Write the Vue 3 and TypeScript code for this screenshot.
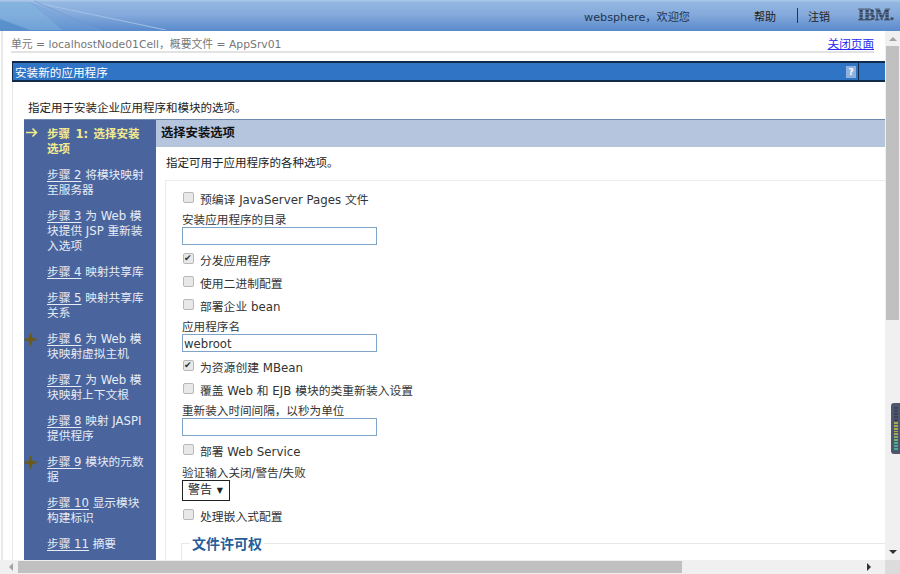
<script setup lang="ts">
interface Step { label: string; rest: string; mark?: 'arrow' | 'star'; current?: boolean }
const steps: Step[] = [
  { label: '步骤 1: 选择安装选项', rest: '', mark: 'arrow', current: true },
  { label: '步骤 2', rest: ' 将模块映射至服务器' },
  { label: '步骤 3', rest: ' 为 Web 模块提供 JSP 重新装入选项' },
  { label: '步骤 4', rest: ' 映射共享库' },
  { label: '步骤 5', rest: ' 映射共享库关系' },
  { label: '步骤 6', rest: ' 为 Web 模块映射虚拟主机', mark: 'star' },
  { label: '步骤 7', rest: ' 为 Web 模块映射上下文根' },
  { label: '步骤 8', rest: ' 映射 JASPI 提供程序' },
  { label: '步骤 9', rest: ' 模块的元数据', mark: 'star' },
  { label: '步骤 10', rest: ' 显示模块构建标识' },
  { label: '步骤 11', rest: ' 摘要' },
]
const meter = Array.from({ length: 15 }, (_, i) => i)
function meterColor(i: number): string {
  if (i < 5) return '#3c4358'
  if (i < 10) return '#a9a94e'
  if (i < 12) return '#7fae72'
  return '#48b08e'
}
</script>

<template>
  <div class="page">
    <header class="top">
      <svg class="swoosh" width="190" height="30" viewBox="0 0 190 30">
        <path d="M0 2H32L62 30H0Z" fill="#7db1de" opacity=".6" />
        <path d="M0 19L30 30H0Z" fill="#4f88c6" opacity=".7" />
        <path d="M28 1L100 30H62Z" fill="#6f9fd6" opacity=".4" />
        <path d="M28 1L166 30" fill="none" stroke="#a9c6e8" stroke-width="1.2" opacity=".8" />
        <path d="M34 1L100 30" fill="none" stroke="#6b97d0" stroke-width="1" opacity=".7" />
      </svg>
      <span class="welcome">websphere，欢迎您</span>
      <span class="toplink help">帮助</span>
      <span class="sep"></span>
      <span class="toplink">注销</span>
      <span class="ibm">IBM.</span>
    </header>
    <div class="middle">
      <main class="content">
        <div class="crumbs">
          <span class="crumbtext">单元 = localhostNode01Cell，概要文件 = AppSrv01</span>
          <a class="close">关闭页面</a>
        </div>
        <div class="titlebar">
          <span class="title">安装新的应用程序</span>
          <span class="q">?</span>
          <span class="tail"></span>
        </div>
        <div class="panel">
          <p class="intro">指定用于安装企业应用程序和模块的选项。</p>
          <div class="wizard">
            <nav class="steps">
              <div v-for="s in steps" :key="s.label" class="step" :class="{ current: s.current }">
                <svg v-if="s.mark === 'arrow'" class="mark" width="14" height="12" viewBox="0 0 14 12">
                  <path d="M1 5.5H11M7.5 1.5L11.5 5.5L7.5 9.5" fill="none" stroke="#f3ec8c" stroke-width="1.6" />
                </svg>
                <svg v-if="s.mark === 'star'" class="mark star" width="13" height="13" viewBox="0 0 13 13">
                  <path d="M6.5 0L8 5L13 6.5L8 8L6.5 13L5 8L0 6.5L5 5Z" fill="#6b5a1a" stroke="#6b5a1a" stroke-width=".7" />
                </svg>
                <span v-if="s.current">{{ s.label }}</span>
                <template v-else><u>{{ s.label }}</u>{{ s.rest }}</template>
              </div>
            </nav>
            <section class="pane">
              <h2 class="panehead">选择安装选项</h2>
              <p class="panedesc">指定可用于应用程序的各种选项。</p>
              <div class="formbox">
                <label class="check"><input type="checkbox" />预编译 JavaServer Pages 文件</label>
                <div class="field"><label>安装应用程序的目录</label><input class="text" type="text" /></div>
                <label class="check"><input type="checkbox" checked />分发应用程序</label>
                <label class="check"><input type="checkbox" />使用二进制配置</label>
                <label class="check"><input type="checkbox" />部署企业 bean</label>
                <div class="field"><label>应用程序名</label><input class="text" type="text" value="webroot" /></div>
                <label class="check"><input type="checkbox" checked />为资源创建 MBean</label>
                <label class="check"><input type="checkbox" />覆盖 Web 和 EJB 模块的类重新装入设置</label>
                <div class="field"><label>重新装入时间间隔，以秒为单位</label><input class="text" type="text" /></div>
                <label class="check"><input type="checkbox" />部署 Web Service</label>
                <div class="field selectfield"><label>验证输入关闭/警告/失败</label>
                  <div class="select">警告<span class="caret">▼</span></div>
                </div>
                <label class="check last"><input type="checkbox" />处理嵌入式配置</label>
                <fieldset class="perm"><legend>文件许可权</legend></fieldset>
              </div>
            </section>
          </div>
        </div>
      </main>
      <aside class="vbar">
        <span class="arrow up"></span>
        <span class="vthumb"></span>
        <span class="arrow down"></span>
      </aside>
    </div>
    <div class="hbar">
      <span class="arrow left"></span>
      <span class="hthumb"></span>
      <span class="arrow right"></span>
      <span class="corner"></span>
    </div>
    <div class="meter">
      <i v-for="i in meter" :key="i" :style="{ background: meterColor(i) }"></i>
    </div>
  </div>
</template>

<style>
html, body { margin: 0; background: #fff; }
</style>

<style scoped>
.page {
  width: 900px; height: 574px; overflow: hidden; display: flex; flex-direction: column; position: relative;
  font-family: "DejaVu Sans", "Noto Sans CJK SC", sans-serif; font-size: 11.5px; color: #333; background: #fff;
}
.top {
  height: 31px; flex: none; display: flex; align-items: center; position: relative;
  background: linear-gradient(#a9c5e8 0, #a9c5e8 1px, #94b7e2 2px, #86abdc 45%, #5d8ccd 96%, #5d8ccd 100%);
}
.swoosh { position: absolute; left: 0; top: 0; }
.welcome { margin-left: 584px; font-size: 11.2px; color: #22344f; width: 170px; }
.toplink { font-size: 11px; color: #222; }
.sep { width: 1px; height: 15px; background: #24344f; margin: 0 10px 0 21px; }
.ibm {
  margin-left: 28px; font: 700 16px/14px "Liberation Serif", serif;
  background: repeating-linear-gradient(#36445a 0 1.5px, rgba(70, 90, 120, .6) 1.5px 2.5px);
  -webkit-background-clip: text; background-clip: text; color: transparent; margin-top: -2px;
  -webkit-text-stroke: .4px #4a5a72;
}
.middle { flex: 1; display: flex; min-height: 0; }
.content {
  flex: 1; min-width: 0; padding-left: 10px; overflow: hidden;
  border-left: 2px solid #e8e8e8; box-sizing: border-box; margin-left: 1px;
}
.crumbs {
  display: flex; justify-content: space-between; align-items: flex-end; height: 20px; margin-right: 11px;
  margin-left: -2px; border-bottom: 2px solid #e2e2e2; color: #777; line-height: 16px;
}
.crumbtext { font-size: 10.8px; position: relative; top: 2px; }
.close { color: #2a2af0; text-decoration: underline; font-size: 11.6px; margin-bottom: -1px; }
.titlebar {
  margin: 8px 0 0 -1px; height: 17px; background: #2f74c5; border: solid #122a4a; border-width: 2px 0 2px 1px; color: #fff;
  display: flex; align-items: center; padding-left: 2px; font-size: 11.6px;
}
.title { flex: 1; }
.q {
  width: 10px; height: 12px; background: #8fb1dc; color: #fff; font: 700 9px/12px "DejaVu Sans", sans-serif; text-align: center; margin-right: 2px;
}
.tail { width: 26px; height: 17px; border-left: 1px solid #122a4a; }
.panel { margin-left: -1px; border-left: 1px solid #e8e8e8; padding-left: 11px; }
.intro { margin: 0; padding: 18px 0 0 4px; height: 19px; line-height: 16px; color: #222; }
.wizard { display: flex; border-top: 1px solid #6f88ad; align-items: flex-start; }
.steps { width: 132px; flex: none; background: #4a659d; height: 442px; color: #e6ebf5; padding-top: 7px; box-sizing: border-box; }
.step { position: relative; padding: 0 8px 0 23px; line-height: 15px; margin-bottom: 11px; font-size: 11.7px; }
.step u { text-underline-offset: 2px; }
.step.current { color: #f3ec8c; font-weight: 700; font-size: 11.5px; word-spacing: 1.5px; padding-right: 12px; }
.mark { position: absolute; left: 1px; top: 0; }
.mark.star { left: 0; top: 1px; }
.pane { flex: 1; min-width: 0; }
.panehead { margin: 0; height: 27px; line-height: 27px; background: #b5c5de; padding-left: 5px; font-size: 12.3px; color: #111; font-weight: 700; }
.panedesc { margin: 0 0 0 10px; height: 33px; line-height: 32px; color: #222; }
.formbox { margin-left: 9px; border: solid #ececec; border-width: 1px 0 0 1px; padding: 6px 0 0 16px; height: 400px; }
.check { display: flex; align-items: center; height: 23px; font-size: 11.8px; color: #333; }
.check.last { margin-top: 1px; }
.check input {
  appearance: none; margin: 0 6px 0 1px; width: 11px; height: 11px; border: 1px solid #b8b8b8; border-radius: 2px; background: #e8e8e8; position: relative; top: -1px; flex: none;
}
.check input:checked::after { content: "✔"; position: absolute; left: 0; top: -2px; font-size: 9px; line-height: 13px; color: #333; }
.field { display: flex; flex-direction: column; align-items: flex-start; font-size: 11.6px; line-height: 13px; color: #333; margin: 4px 0 3px; }
.selectfield { margin-top: 5px; }
.text {
  width: 195px; height: 18px; box-sizing: border-box; border: 1px solid #7fa3c9; padding: 1px 1px 0; font: 11.7px "DejaVu Sans", sans-serif; color: #333; outline: none;
}
.select {
  width: 48px; height: 21px; box-sizing: border-box; border: 1px solid #222; font-size: 12px; line-height: 19px; padding-left: 5px; display: flex; justify-content: space-between; padding-right: 6px; color: #222;
}
.caret { font-size: 8px; }
.perm { margin: 6px 0 0 -1px; padding: 0; border: 1px solid #e8e8e8; border-width: 1px 0 0 1px; height: 60px; }
.perm legend { font-size: 14px; font-weight: 700; color: #265d98; padding: 0 2px; margin-left: 8px; }
.vbar { width: 15px; flex: none; background: #f0f0f0; position: relative; display: flex; flex-direction: column; align-items: center; }
.vthumb { width: 13px; height: 274px; background: #c0c0c0; margin-top: 0; }
.arrow { width: 0; height: 0; border: 4px solid transparent; flex: none; }
.up { border-bottom: 4px solid #a3a3a3; border-top: 0; margin: 6px 0 5px; }
.down { border-top: 4px solid #333; border-bottom: 0; margin-top: auto; margin-bottom: 6px; }
.hbar { height: 14px; flex: none; background: #f0f0f0; display: flex; align-items: center; }
.hthumb { width: 664px; height: 12px; background: #c0c0c0; margin-left: 5px; }
.left { border-right: 4px solid #a3a3a3; border-left: 0; margin-left: 9px; }
.right { border-left: 4px solid #333; border-right: 0; margin-left: auto; margin-right: 15px; }
.corner { width: 15px; height: 14px; background: #dcdcdc; flex: none; margin-left: -1px; }
.meter {
  position: absolute; left: 891px; top: 403px; width: 9px; height: 51px; background: #4e566e; border-radius: 3px 0 0 3px; box-sizing: border-box; padding: 4px 2px 4px 3px;
  display: flex; flex-direction: column; gap: 1px;
}
.meter i { display: block; flex: 1; }
</style>
